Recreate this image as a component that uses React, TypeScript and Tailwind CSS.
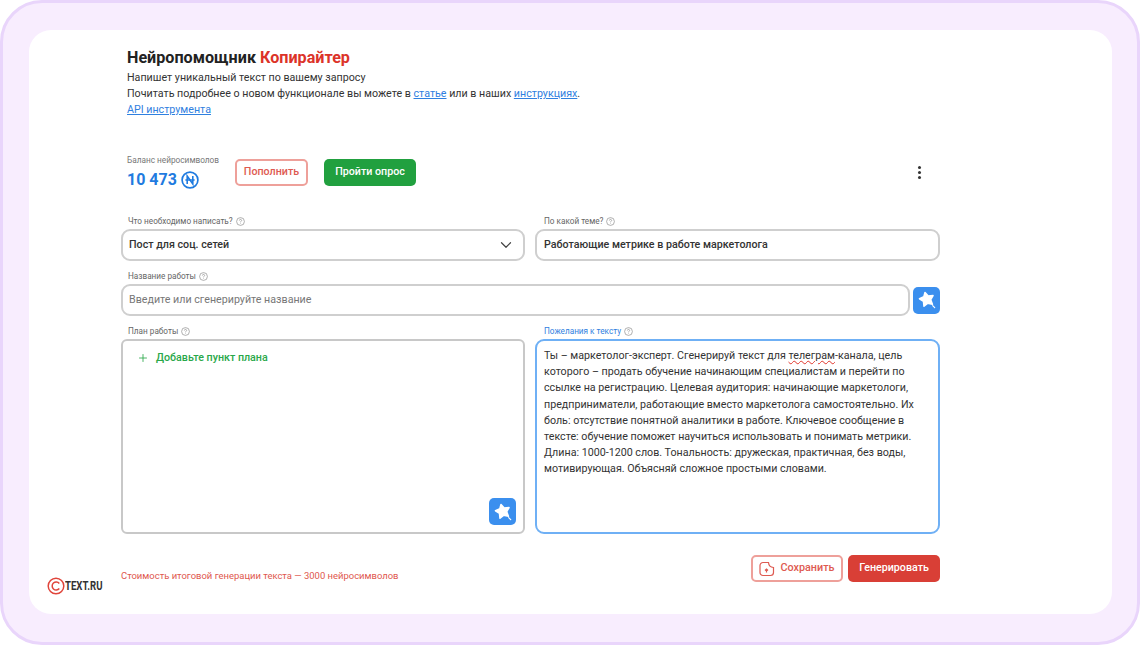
import { ChevronDown, Plus } from "lucide-react";

const Hint = () => (
  <svg viewBox="0 0 12 12" className="ml-[3px] h-[9px] w-[9px] shrink-0 text-[#8a8a8a]" fill="none" stroke="currentColor">
    <circle cx="6" cy="6" r="5.2" strokeWidth="0.9" />
    <path d="M4.5 4.7a1.5 1.5 0 1 1 2.2 1.3c-.5.3-.7.5-.7 1" strokeWidth="0.9" />
    <circle cx="6" cy="8.8" r="0.5" fill="currentColor" stroke="none" />
  </svg>
);

const FieldLabel = ({ text, active, right }: { text: string; active?: boolean; right?: boolean }) => (
  <div
    className={`mb-[2px] flex h-[11px] items-center text-[8.2px] leading-[11px] ${right ? "pl-[9px]" : "pl-[7px]"} ${active ? "text-[#2f80e0]" : "text-[#666]"}`}
  >
    {text}
    <Hint />
  </div>
);

const MagicButton = ({ className }: { className?: string }) => (
  <button className={`flex h-[27px] w-[27px] items-center justify-center rounded-[5px] bg-[#3b8fee] ${className ?? ""}`}>
    <svg viewBox="0 0 20 20" className="h-[20px] w-[20px]">
      <path
        d="M8 2.500l3.200 3.600 4.800-.6-2.300 4.200 1.700 4.500-4.600-1-3.800 3-.5-4.800-4-2.600 4.400-2z"
        fill="#fff"
        stroke="#fff"
        strokeWidth="1.6"
        strokeLinejoin="round"
      />
      <path d="M15.700 15.700l2 2" stroke="#fff" strokeWidth="1.200" strokeLinecap="round" />
    </svg>
  </button>
);

export default function App() {
  return (
    <div className="h-[645px] w-[1140px] overflow-hidden rounded-[42px] border-[3px] border-[#e9d5fb] bg-[#f8edfe] pl-[26px] pr-[25px] pt-[27px] font-['Roboto',sans-serif] text-[#333]">
      <div className="h-[584px] w-[1083px] rounded-[22px] bg-white pt-[18px]">
        <div className="ml-[92px] w-[819px]">
          <div className="pl-[6px]">
            <h1 className="text-[16.15px] font-bold leading-[20px] text-[#222]">
              Нейропомощник <span className="text-[#dc3329]">Копирайтер</span>
            </h1>
            <p className="mt-[2px] text-[10.7px] leading-[16px]">Напишет уникальный текст по вашему запросу</p>
            <p className="text-[10.7px] leading-[16px]">
              Почитать подробнее о новом функционале вы можете в <a className="text-[#2f80e0] underline">статье</a> или в
              наших <a className="text-[#2f80e0] underline">инструкциях</a>.
            </p>
            <a className="block text-[10.7px] leading-[16px] text-[#2f80e0] underline">API инструмента</a>
          </div>

          <div className="mt-[37px] flex items-center pl-[6px]">
            <div className="w-[108px]">
              <div className="text-[8.25px] leading-[11px] text-[#777]">Баланс нейросимволов</div>
              <div className="mt-[4px] flex items-center text-[16px] font-bold leading-[20px] text-[#1f7be0]">
                10 473
                <svg viewBox="0 0 18 18" className="ml-[4px] h-[18px] w-[18px]" fill="none" stroke="#1f7be0">
                  <circle cx="9" cy="9" r="7.900" strokeWidth="1.700" />
                  <path d="M6.200 13V5l5.600 8V5" strokeWidth="1.600" />
                  <path d="M4.400 9h9.200" strokeWidth="1.300" />
                </svg>
              </div>
            </div>
            <button className="h-[27px] w-[73px] rounded-[5px] border-2 border-[#eea09a] text-[10.7px] font-medium text-[#de5a51]">Пополнить</button>
            <button className="ml-[16px] h-[27px] w-[92px] rounded-[5px] bg-[#21a03f] text-[10.7px] font-medium text-white">Пройти опрос</button>
            <div className="ml-auto mr-[19px] flex flex-col gap-[2px]">
              <span className="h-[3px] w-[3px] rounded-full bg-[#333]" />
              <span className="h-[3px] w-[3px] rounded-full bg-[#333]" />
              <span className="h-[3px] w-[3px] rounded-full bg-[#333]" />
            </div>
          </div>

          <div className="mt-[26px] grid grid-cols-[404px_405px] gap-x-[10px]">
            <div>
              <FieldLabel text="Что необходимо написать?" />
              <div className="flex h-[32px] items-center justify-between rounded-[9px] border-2 border-[#cfcfcf] pl-[6px] pr-[8px] text-[10.7px] font-medium">
                Пост для соц. сетей
                <ChevronDown className="h-[18px] w-[18px] text-[#444]" strokeWidth={1.6} />
              </div>
            </div>
            <div>
              <FieldLabel text="По какой теме?" right />
              <div className="flex h-[32px] items-center rounded-[9px] border-2 border-[#cfcfcf] pl-[7px] text-[10.7px] font-medium">
                Работающие метрике в работе маркетолога
              </div>
            </div>
          </div>

          <div className="mt-[10px]">
            <FieldLabel text="Название работы" />
            <div className="flex items-center gap-[3px]">
              <div className="flex h-[32px] w-[790px] items-center rounded-[9px] border-2 border-[#cfcfcf] pl-[6px] text-[10.7px] text-[#777]">
                Введите или сгенерируйте название
              </div>
              <MagicButton />
            </div>
          </div>

          <div className="mt-[10px] grid grid-cols-[404px_405px] gap-x-[10px]">
            <div>
              <FieldLabel text="План работы" />
              <div className="flex h-[195px] flex-col justify-between rounded-[6px] border-2 border-[#c8c8c8] pb-[7px] pl-[14px] pr-[7px] pt-[9px]">
                <div className="flex items-center text-[10.7px] font-medium text-[#2aa84a]">
                  <Plus className="mr-[7px] h-[12px] w-[12px]" strokeWidth={1.7} />
                  Добавьте пункт плана
                </div>
                <MagicButton className="self-end" />
              </div>
            </div>
            <div>
              <FieldLabel text="Пожелания к тексту" active right />
              <div className="h-[195px] rounded-[9px] border-2 border-[#6fb0f5] pb-[3px] pl-[7px] pr-[14px] pt-[7px] text-[10.7px] leading-[16.2px]">
                Ты – маркетолог-эксперт. Сгенерируй текст для{" "}
                <span className="underline decoration-[#e0352b] decoration-wavy decoration-1">телеграм</span>-канала, цель
                которого – продать обучение начинающим специалистам и перейти по ссылке на регистрацию. Целевая аудитория:
                начинающие маркетологи, предприниматели, работающие вместо маркетолога самостоятельно. Их боль: отсутствие
                понятной аналитики в работе. Ключевое сообщение в тексте: обучение поможет научиться использовать и понимать
                метрики. Длина: 1000-1200 слов. Тональность: дружеская, практичная, без воды, мотивирующая. Объясняй сложное
                простыми словами.
              </div>
            </div>
          </div>
        </div>

        <div className="ml-[18px] mt-[21px] flex w-[893px]">
          <div className="mt-[24px] flex h-[14px] w-[74px] items-center">
            <svg viewBox="0 0 18 18" className="h-[18px] w-[18px] shrink-0" fill="none" stroke="#e0453b">
              <circle cx="9" cy="9" r="7.800" strokeWidth="1.500" />
              <path d="M12.300 6.500a4 4 0 1 0 0 5" strokeWidth="1.500" />
            </svg>
            <span className="origin-left scale-x-[0.8] text-[12px] font-bold leading-none text-[#333]">TEXT.RU</span>
          </div>
          <div className="mt-[15px] text-[9.45px] leading-[12px] text-[#e0574e]">Стоимость итоговой генерации текста — 3000 нейросимволов</div>
          <div className="ml-auto flex gap-[5px]">
            <button className="flex h-[27px] w-[92px] items-center justify-center gap-[5px] rounded-[5px] border-2 border-[#eea09a] text-[10.8px] font-medium text-[#de5a51]">
              <svg viewBox="0 0 16 16" className="h-[16px] w-[16px]" fill="none" stroke="#de5a51" strokeWidth="1.200">
                <path d="M4 1.500h5.500c.2 2.800 2.200 4.800 5 5v5a3 3 0 0 1-3 3H4a3 3 0 0 1-3-3v-7a3 3 0 0 1 3-3z" />
                <path d="M7.500 11.500V8M6 9.500L7.500 8 9 9.500" />
              </svg>
              Сохранить
            </button>
            <button className="h-[27px] w-[92px] rounded-[5px] bg-[#d93f36] text-[10.7px] font-medium text-white">Генерировать</button>
          </div>
        </div>
      </div>
    </div>
  );
}
